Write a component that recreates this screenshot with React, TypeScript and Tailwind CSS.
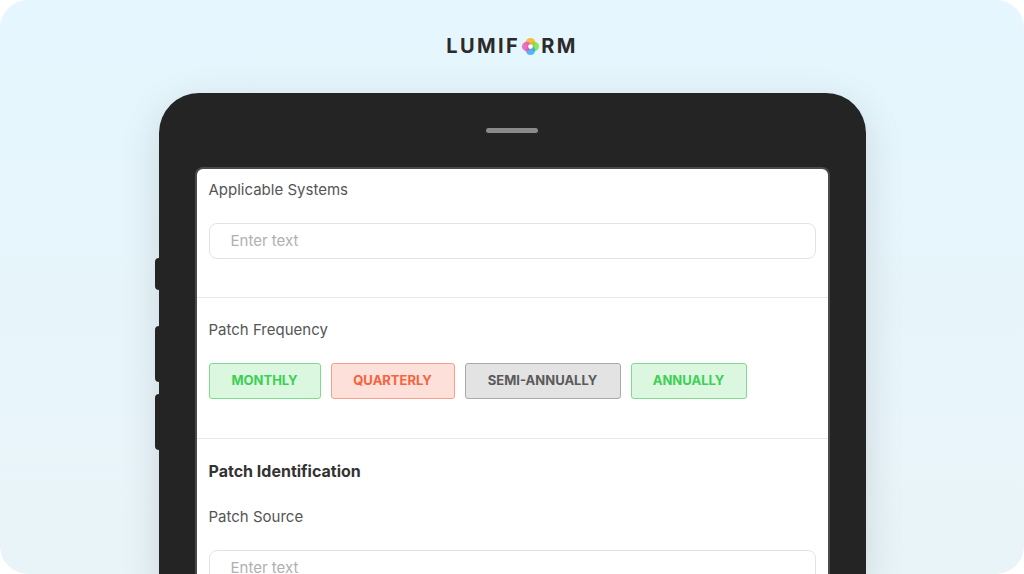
export default function App() {
  const f = { fontFamily: "Inter, 'Noto Sans', sans-serif" };
  const btns = [
    { t: "MONTHLY", w: "w-[112px]", c: "bg-[#dcf7df] border-[#7fdc8c] text-[#3ccf55]" },
    { t: "QUARTERLY", w: "w-[124px]", c: "bg-[#fde0d9] border-[#f5a08c] text-[#f5633f]" },
    { t: "SEMI-ANNUALLY", w: "w-[156px]", c: "bg-[#e3e3e3] border-[#a8a8a8] text-[#5a5a5a]" },
    { t: "ANNUALLY", w: "w-[116px]", c: "bg-[#dcf7df] border-[#7fdc8c] text-[#3ccf55]" },
  ];
  return (
    <div className="w-[1024px] h-[574px] bg-white overflow-hidden" style={f}>
      <div className="w-full h-full rounded-[28px] bg-gradient-to-b from-[#e5f6fe] to-[#e9f4f8] flex flex-col items-center overflow-hidden">
        <div className="mt-[34px] h-[24px] flex items-center text-[20px] font-bold tracking-[0.12em] text-[#2b2b2b]">
          <span>LUMIF</span>
          <svg width="19" height="19" viewBox="0 0 20 20" className="mx-[1px]">
            <circle cx="10" cy="6" r="5" fill="#ffb020" opacity="0.85" />
            <circle cx="14" cy="10" r="5" fill="#7ddc3a" opacity="0.8" />
            <circle cx="10" cy="14" r="5" fill="#2aa8f0" opacity="0.8" />
            <circle cx="6" cy="10" r="5" fill="#f04fb5" opacity="0.8" />
            <circle cx="10" cy="10" r="2.5" fill="#fff" />
          </svg>
          <span>RM</span>
        </div>
        <div className="relative mt-[35px] w-[707px] flex-1 bg-[#252424] rounded-t-[40px] shadow-[0_10px_40px_rgba(0,0,0,0.12)] flex flex-col items-center">
          <div className="absolute -left-[4px] top-[165px] w-[4px] h-[32px] bg-[#252424] rounded-l" />
          <div className="absolute -left-[4px] top-[233px] w-[4px] h-[56px] bg-[#252424] rounded-l" />
          <div className="absolute -left-[4px] top-[301px] w-[4px] h-[56px] bg-[#252424] rounded-l" />
          <div className="mt-[35px] w-[52px] h-[5px] rounded-full bg-[#8a8a8a]" />
          <div className="mt-[34px] w-[631px] flex-1 bg-white rounded-t-[8px] border-t-2 border-x-2 border-[#4a4a4a] box-content -mx-[2px] text-[#555]">
            <div className="px-[12px] pt-[12px] pb-[38px] border-b border-[#e8e8e8]">
              <div className="text-[15px] leading-[18px]">Applicable Systems</div>
              <div className="mt-[24px] h-[36px] rounded-[8px] border border-[#e3e3e3] px-[21px] flex items-center text-[15px] text-[#b0b0b0]">Enter text</div>
            </div>
            <div className="px-[12px] pt-[23px] pb-[39px] border-b border-[#e8e8e8]">
              <div className="text-[15px] leading-[18px]">Patch Frequency</div>
              <div className="mt-[24px] flex gap-[10px]">
                {btns.map((b) => (
                  <div key={b.t} className={`${b.w} h-[36px] rounded-[3px] border flex items-center justify-center text-[13px] font-bold ${b.c}`}>{b.t}</div>
                ))}
              </div>
            </div>
            <div className="px-[12px] pt-[22px]">
              <div className="text-[16px] leading-[20px] font-bold text-[#333]">Patch Identification</div>
              <div className="mt-[27px] text-[15px] leading-[18px]">Patch Source</div>
              <div className="mt-[24px] h-[36px] rounded-[8px] border border-[#e3e3e3] px-[21px] flex items-center text-[15px] text-[#b0b0b0]">Enter text</div>
            </div>
          </div>
        </div>
      </div>
    </div>
  );
}
